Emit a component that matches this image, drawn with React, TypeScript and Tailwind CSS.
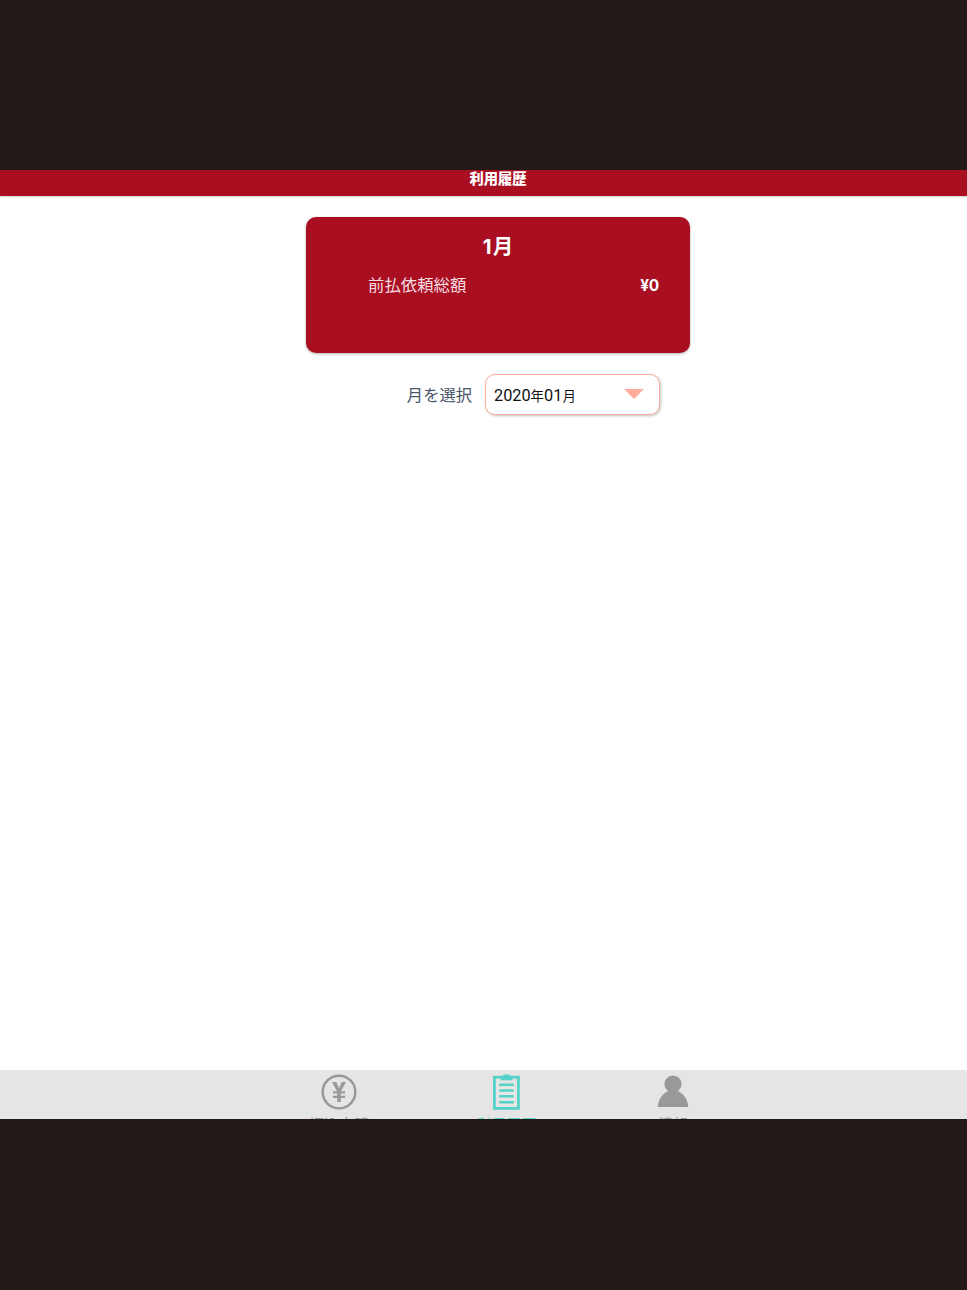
import React from 'react';

interface TabProps {
  label: string;
  active?: boolean;
  children: React.ReactNode;
}

const Tab: React.FC<TabProps> = ({ label, active, children }) => {
  return (
    <button
      className={`flex h-[67px] w-[167px] shrink-0 flex-col items-center pt-1 ${active ? 'text-[#55d3c8]' : 'text-[#999999]'}`}
    >
      {children}
      <span className="mt-1 text-[15px] leading-[22px] whitespace-nowrap">{label}</span>
    </button>
  );
};

const YenIcon = () => (
  <svg className="shrink-0" width="36" height="36" viewBox="0 0 36 36" fill="none" stroke="currentColor">
    <circle cx="18" cy="18" r="16.3" strokeWidth="2.5" />
    <path d="M11 8h4.2L18 14.2 20.8 8H25l-5.2 9.6V28h-3.6V17.6z" fill="currentColor" stroke="none" />
    <path d="M12 18.4h12M12 22.9h12" strokeWidth="2.4" />
  </svg>
);

const ClipboardIcon = () => (
  <svg className="shrink-0" width="36" height="36" viewBox="0 0 36 36" fill="none" stroke="currentColor">
    <rect x="6.4" y="3.2" width="24" height="31.2" strokeWidth="2.8" />
    <path d="M12.6 1.8h3V.4h5.8v1.4h3v4.4H12.6z" fill="currentColor" stroke="none" />
    <path d="M11.2 10.7h14.5M11.2 16.5h14.5M11.2 22.3h14.5M11.2 28.2h14.5" strokeWidth="2.6" />
  </svg>
);

const PersonIcon = () => (
  <svg className="shrink-0" width="36" height="36" viewBox="0 0 36 36" fill="currentColor">
    <circle cx="18" cy="10" r="8.6" />
    <path d="M2.8 33C3.2 25 7.6 19.4 13.3 17h9.4C28.4 19.4 32.8 25 33.2 33z" />
  </svg>
);

export default function App() {
  return (
    <div className="flex h-[1290px] w-[967px] flex-col overflow-hidden bg-[#231917] pt-[170px] pb-[171px] font-['Inter','Noto_Sans_CJK_JP',sans-serif]">
      <header className="z-10 flex h-[26px] shrink-0 justify-center bg-[#a90e21] pl-[29px] shadow-[0_1px_2px_rgba(0,0,0,0.2)]">
        <h1 className="text-[14.3px] leading-[18px] font-black text-white">利用履歴</h1>
      </header>

      <main className="flex min-h-0 flex-1 flex-col items-center bg-white pt-[21px] pl-[29px]">
        <section className="h-[136px] w-[384px] rounded-[10px] bg-[#a90e21] px-[31px] pt-[15px] text-white shadow-[0_1px_3px_rgba(0,0,0,0.3)]">
          <h2 className="text-center text-[20.5px] leading-[30px] font-bold">
            <span className="mr-px">1</span>月
          </h2>
          <div className="mt-[9px] flex items-center justify-between pl-[31px] leading-6">
            <span className="text-[16.4px] text-[#f8dde0]">前払依頼総額</span>
            <span className="pt-[3px] text-[15.5px] font-bold tracking-[-0.3px]">¥0</span>
          </div>
        </section>

        <div className="mt-[21px] flex w-[384px] items-center justify-end pr-[30px]">
          <span className="pt-px text-[16.3px] text-[#4a5568]">月を選択</span>
          <button className="ml-[13px] flex h-[41px] w-[175px] items-center justify-between rounded-[10px] border border-[#ffad99] bg-white pr-[15px] pl-2 shadow-[1px_1px_3px_rgba(0,0,0,0.25)]">
            <span className="pt-[3px] font-['Roboto','Noto_Sans_CJK_JP',sans-serif] text-[15px] text-[#111111]">
              <span className="text-[16.3px]">2020</span>
              <span className="text-[13.5px]">年</span>
              <span className="text-[16.3px]">01</span>
              <span className="text-[13.5px]">月</span>
            </span>
            <svg width="20" height="10" viewBox="0 0 20 10" className="mb-px fill-[#ffad99]">
              <path d="M0 0h20L10 10z" />
            </svg>
          </button>
        </div>
      </main>

      <nav className="flex h-[49px] shrink-0 justify-center overflow-hidden bg-[#e5e5e5] pl-[45px]">
        <Tab label="振込申請">
          <YenIcon />
        </Tab>
        <Tab label="利用履歴" active>
          <ClipboardIcon />
        </Tab>
        <Tab label="情報">
          <PersonIcon />
        </Tab>
      </nav>
    </div>
  );
}
